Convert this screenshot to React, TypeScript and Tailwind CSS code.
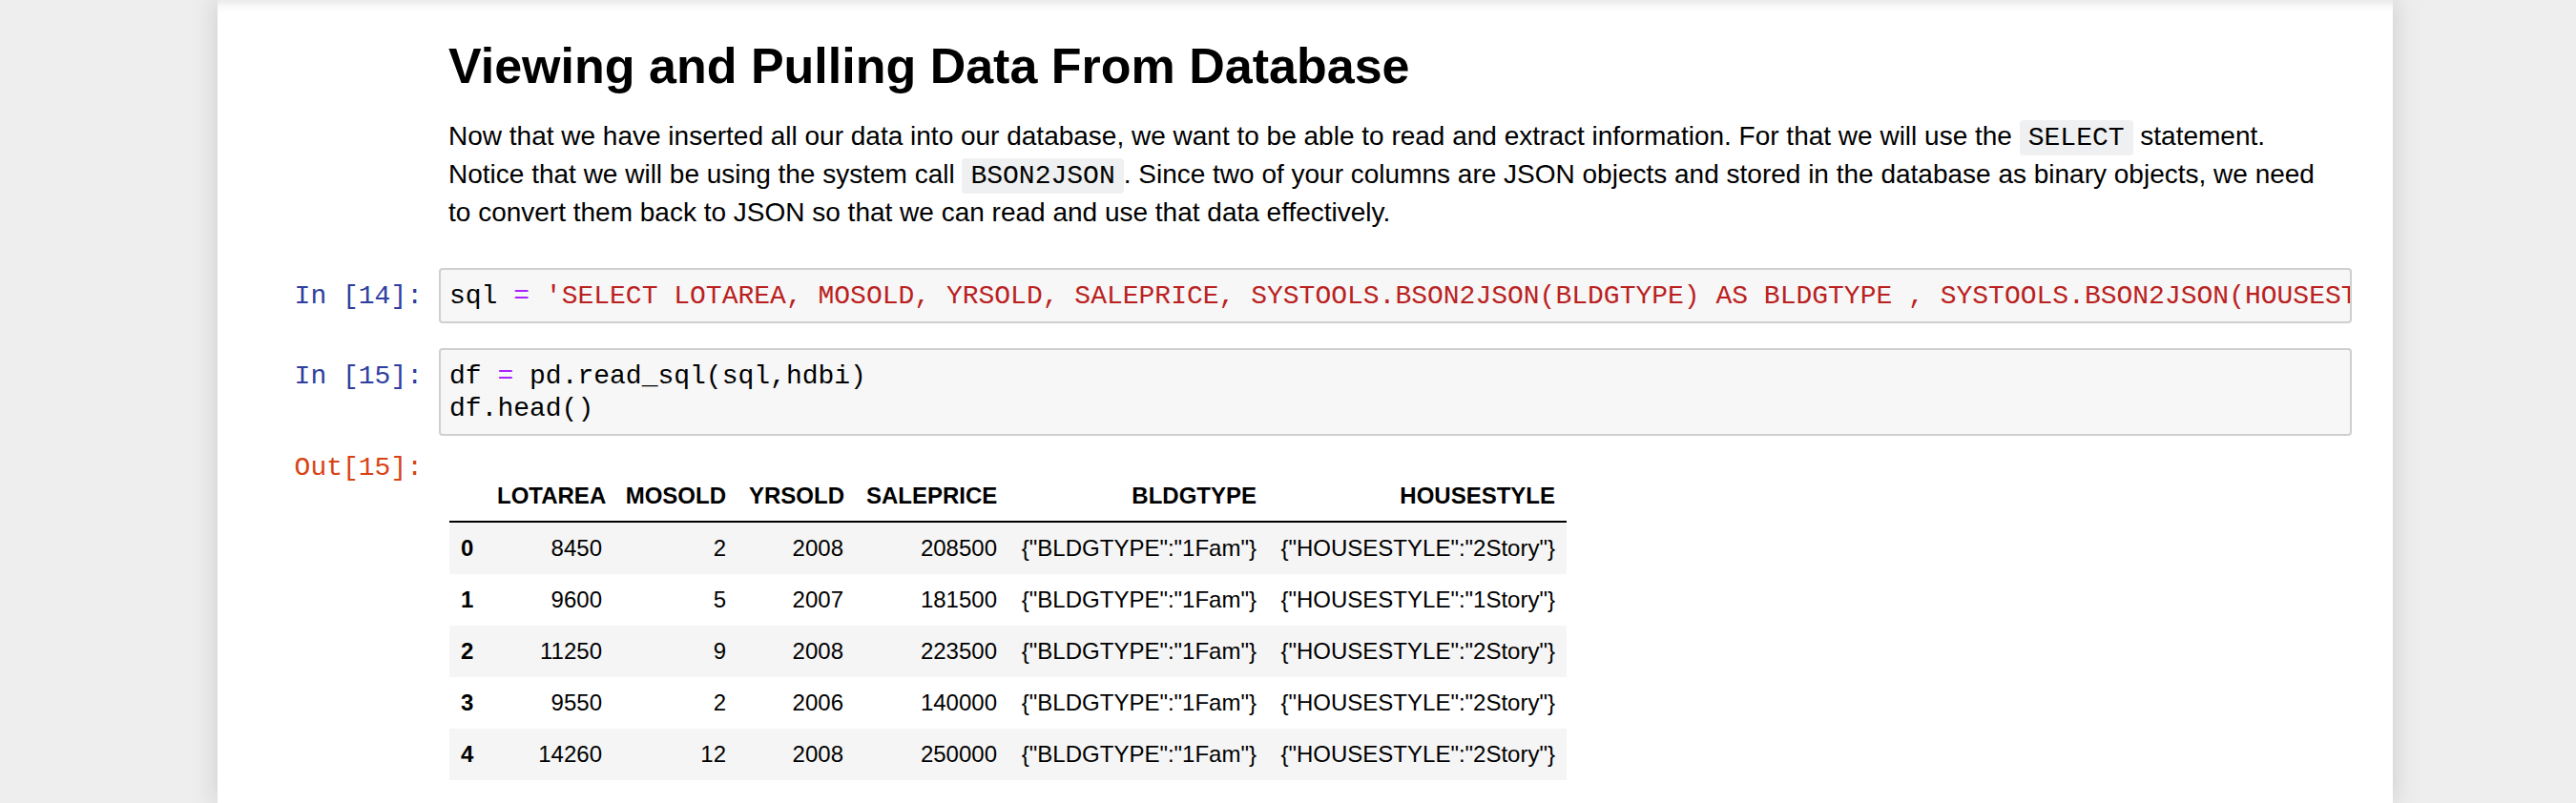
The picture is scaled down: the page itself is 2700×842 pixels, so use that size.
const sans = "font-['Liberation_Sans',Arial,Helvetica,sans-serif]";
const mono = "font-['Liberation_Mono','Courier_New',monospace]";

function InlineCode({ children }: { children: string }) {
  return (
    <code className={`${mono} rounded-[4px] bg-[#eff0f1] px-[9px] py-[3px] text-[28px] leading-none`}>
      {children}
    </code>
  );
}

function Prompt({ label, out }: { label: string; out?: boolean }) {
  return (
    <div
      className={`${mono} w-[232px] shrink-0 whitespace-pre pr-[17px] text-right text-[28px] leading-[34px] ${
        out ? "pt-0 text-[#D84315]" : "pt-[13px] text-[#303F9F]"
      }`}
    >
      {label}
    </div>
  );
}

function CodeCell({ n, lines, className }: { n: number; lines: React.ReactNode[]; className: string }) {
  return (
    <div className={`flex ${className}`}>
      <Prompt label={`In [${n}]:`} />
      <div className="min-w-0 flex-1 overflow-hidden rounded-[4px] border-2 border-[#cfcfcf] bg-[#f7f7f7] pb-[9px] pl-[9px] pt-[11px]">
        {lines.map((line, i) => (
          <div key={i} className={`${mono} whitespace-pre text-[28px] leading-[34px] text-black`}>
            {line}
          </div>
        ))}
      </div>
    </div>
  );
}

const eq = <span className="text-[#AA22FF]">=</span>;

const columns = [
  { label: "", w: "w-[38px]" },
  { label: "LOTAREA", w: "w-[134px]" },
  { label: "MOSOLD", w: "w-[130px]" },
  { label: "YRSOLD", w: "w-[123px]" },
  { label: "SALEPRICE", w: "w-[161px]" },
  { label: "BLDGTYPE", w: "w-[272px]" },
  { label: "HOUSESTYLE", w: "w-[313px]" },
];

const rows = [
  ["8450", "2", "2008", "208500", "2Story"],
  ["9600", "5", "2007", "181500", "1Story"],
  ["11250", "9", "2008", "223500", "2Story"],
  ["9550", "2", "2006", "140000", "2Story"],
  ["14260", "12", "2008", "250000", "2Story"],
];

function DataFrame() {
  return (
    <table className={`${sans} w-[1171px] table-fixed border-separate border-spacing-0 text-[24px] leading-normal text-black`}>
      <thead>
        <tr>
          {columns.map((c) => (
            <th key={c.label} className={`${c.w} h-[54px] border-b-2 border-black px-[12px] text-right align-middle font-bold`}>
              {c.label}
            </th>
          ))}
        </tr>
      </thead>
      <tbody>
        {rows.map((r, i) => (
          <tr key={i} className={i % 2 === 0 ? "bg-[#f5f5f5]" : "bg-white"}>
            <th className="h-[54px] px-[12px] text-left align-middle font-bold">{i}</th>
            <td className="px-[12px] text-right align-middle">{r[0]}</td>
            <td className="px-[12px] text-right align-middle">{r[1]}</td>
            <td className="px-[12px] text-right align-middle">{r[2]}</td>
            <td className="px-[12px] text-right align-middle">{r[3]}</td>
            <td className="whitespace-nowrap px-[12px] text-right align-middle">{'{"BLDGTYPE":"1Fam"}'}</td>
            <td className="whitespace-nowrap px-[12px] text-right align-middle">{`{"HOUSESTYLE":"${r[4]}"}`}</td>
          </tr>
        ))}
      </tbody>
    </table>
  );
}

export default function App() {
  return (
    <div className="h-[842px] w-[2700px] overflow-hidden bg-[#eeeeee]">
      <div className="ml-[228px] h-full w-[2280px] bg-white pr-[43px] pt-[39px] shadow-[inset_0_14px_14px_-14px_rgba(87,87,87,0.25),0_0_24px_2px_rgba(87,87,87,0.2)]">
        {/* markdown cell */}
        <div className={`${sans} pl-[242px] text-black`}>
          <h1 className="text-[52px] font-bold leading-[60px]">Viewing and Pulling Data From Database</h1>
          <div className="mt-[24px] text-[28px] leading-[40px]">
            <p className="h-[40px] whitespace-nowrap">
              Now that we have inserted all our data into our database, we want to be able to read and extract
              information. For that we will use the <InlineCode>SELECT</InlineCode> statement.
            </p>
            <p className="h-[40px] whitespace-nowrap">
              Notice that we will be using the system call <InlineCode>BSON2JSON</InlineCode>. Since two of your
              columns are JSON objects and stored in the database as binary objects, we need
            </p>
            <p className="h-[40px] whitespace-nowrap">
              to convert them back to JSON so that we can read and use that data effectively.
            </p>
          </div>
        </div>

        <CodeCell
          n={14}
          className="mt-[38px]"
          lines={[
            <>
              sql {eq}{" "}
              <span className="text-[#BA2121]">
                'SELECT LOTAREA, MOSOLD, YRSOLD, SALEPRICE, SYSTOOLS.BSON2JSON(BLDGTYPE) AS BLDGTYPE ,
                SYSTOOLS.BSON2JSON(HOUSESTYLE) AS HOUSESTYLE FROM HOUSES FETCH FIRST 5 ROWS ONLY'
              </span>
            </>,
          ]}
        />

        <CodeCell
          n={15}
          className="mt-[26px]"
          lines={[
            <>
              df {eq} pd.read_sql(sql,hdbi)
            </>,
            "df.head()",
          ]}
        />

        <div className="mt-[17px] flex">
          <Prompt label="Out[15]:" out />
          <div className="pl-[11px] pt-[20px]">
            <DataFrame />
          </div>
        </div>
      </div>
    </div>
  );
}
